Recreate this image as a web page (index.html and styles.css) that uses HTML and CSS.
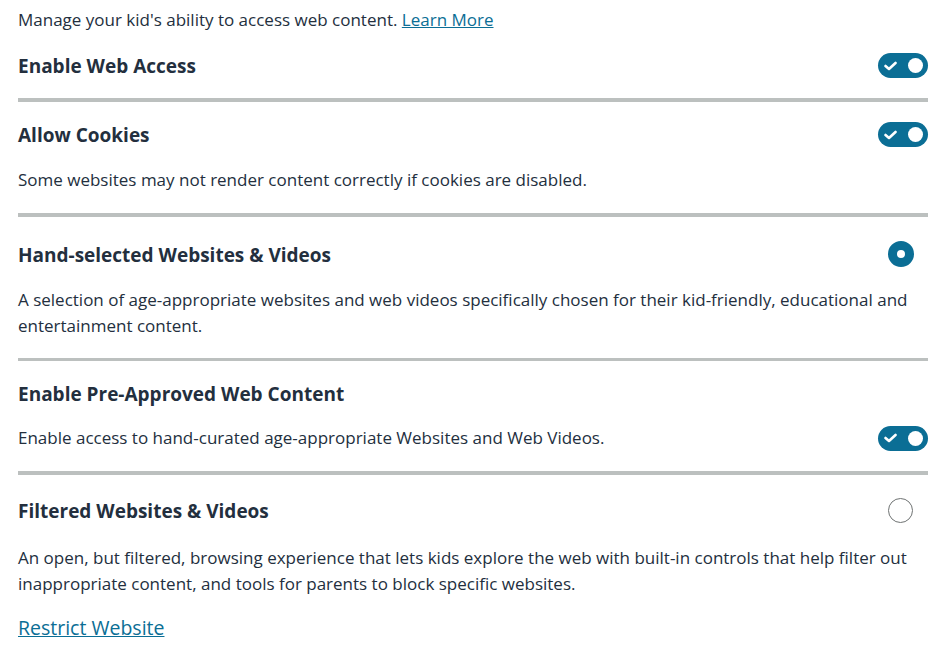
FILE: index.html
```html
<!DOCTYPE html>
<html lang="en">

<head>
    <meta charset="UTF-8">
    <meta name="viewport" content="width=device-width, initial-scale=1.0">
    <title>Web Settings</title>
    <link rel="stylesheet" href="styles.css">
</head>

<body>

    <div id="settings">
        <p class="intro">Manage your kid's ability to access web content. <a href="#">Learn More</a></p>

        <div class="section">
            <div class="row">
                <h2>Enable Web Access</h2>
                <span class="toggle on"><svg width="13" height="10" viewBox="0 0 13 10"><polyline points="1.5,5 5,8 11.5,2" fill="none" stroke="#fff" stroke-width="2.6" stroke-linecap="round" stroke-linejoin="round"/></svg><span class="knob"></span></span>
            </div>
        </div>

        <div class="section">
            <div class="row">
                <h2>Allow Cookies</h2>
                <span class="toggle on"><svg width="13" height="10" viewBox="0 0 13 10"><polyline points="1.5,5 5,8 11.5,2" fill="none" stroke="#fff" stroke-width="2.6" stroke-linecap="round" stroke-linejoin="round"/></svg><span class="knob"></span></span>
            </div>
            <p class="desc">Some websites may not render content correctly if cookies are disabled.</p>
        </div>

        <div class="section choice thin">
            <div class="row">
                <h2>Hand-selected Websites &amp; Videos</h2>
                <span class="radio checked"></span>
            </div>
            <p class="desc">A selection of age-appropriate websites and web videos specifically chosen for their kid-friendly, educational and entertainment content.</p>
        </div>

        <div class="section">
            <div class="row">
                <h2>Enable Pre-Approved Web Content</h2>
            </div>
            <div class="row sub">
                <p>Enable access to hand-curated age-appropriate Websites and Web Videos.</p>
                <span class="toggle on"><svg width="13" height="10" viewBox="0 0 13 10"><polyline points="1.5,5 5,8 11.5,2" fill="none" stroke="#fff" stroke-width="2.6" stroke-linecap="round" stroke-linejoin="round"/></svg><span class="knob"></span></span>
            </div>
        </div>

        <div class="section choice last">
            <div class="row">
                <h2>Filtered Websites &amp; Videos</h2>
                <span class="radio"></span>
            </div>
            <p class="desc wide">An open, but filtered, browsing experience that lets kids explore the web with built-in controls that help filter out inappropriate content, and tools for parents to block specific websites.</p>
            <p class="more"><a href="#">Restrict Website</a></p>
        </div>
    </div>

</body>

</html>
```

FILE: styles.css
```css
body {
    font-family: "Open Sans", Arial, sans-serif;
    font-size: 17px;
    color: #232f3e;
    background-color: #fff;
    margin: 0;
}

#settings {
    padding: 7px 23px 0 18px;
}

p {
    margin: 0;
    line-height: 26px;
}

a {
    color: #0b6e95;
    text-decoration: underline;
}

h2 {
    margin: 0;
    font-size: 19px;
    font-weight: 700;
    line-height: 24px;
    padding-top: 1px;
}

.section {
    padding: 20px 0;
    border-bottom: 4px solid #bcc0bf;
}

.section.choice {
    padding-top: 24px;
    padding-bottom: 19px;
}

.section.thin {
    border-bottom-width: 3px;
}

.section.last {
    padding-top: 23px;
    border-bottom: none;
}

.row {
    display: flex;
    align-items: center;
    justify-content: space-between;
    min-height: 25px;
}

.row.sub {
    margin-top: 19px;
}

.desc {
    margin-top: 20px;
}

.desc.wide {
    margin-top: 22px;
}

.more {
    margin-top: 18px;
    font-size: 19.5px;
}

/* toggle switch */
.toggle {
    width: 50px;
    height: 25px;
    border-radius: 13px;
    background-color: #0b6e95;
    display: flex;
    align-items: center;
    justify-content: space-between;
    padding: 0 5px 0 6px;
    box-sizing: border-box;
    flex-shrink: 0;
}

.toggle svg {
    display: block;
}

.knob {
    width: 15px;
    height: 15px;
    border-radius: 50%;
    background-color: #fff;
}

/* radio buttons */
.radio {
    width: 25px;
    height: 25px;
    border-radius: 50%;
    border: 1.5px solid #6f7373;
    box-sizing: border-box;
    margin-right: 15px;
    flex-shrink: 0;
}

.radio.checked {
    width: 26px;
    height: 26px;
    border: 9px solid #0b6e95;
    margin-right: 14px;
}
```
